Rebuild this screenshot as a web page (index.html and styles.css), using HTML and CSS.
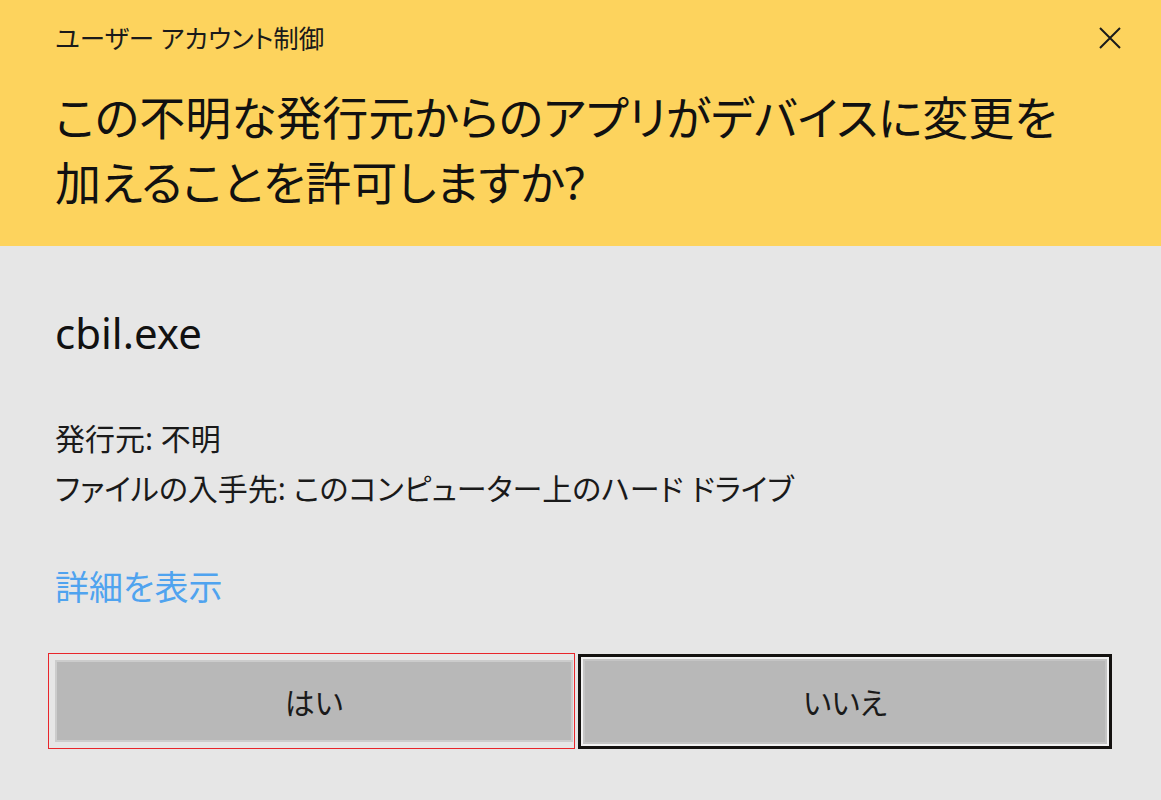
FILE: index.html
```html
<!DOCTYPE html>
<html lang="ja">
<head>
<meta charset="utf-8">
<title>ユーザー アカウント制御</title>
<link rel="stylesheet" href="styles.css">
</head>
<body>
<div class="dialog">
  <header class="head">
    <div class="titlebar">
      <span class="title">ユーザー アカウント制御</span>
      <span class="close" aria-label="閉じる">
        <svg width="24" height="24" viewBox="0 0 24 24"><path d="M2 2 L22 22 M22 2 L2 22" stroke="#1a1a1a" stroke-width="2" fill="none"/></svg>
      </span>
    </div>
    <h1 class="question">この不明な発行元からのアプリがデバイスに変更を<br>加えることを許可しますか?</h1>
  </header>
  <main class="body">
    <div class="app">cbil.exe</div>
    <div class="info">
      <div>発行元: 不明</div>
      <div>ファイルの入手先: このコンピューター上のハード ドライブ</div>
    </div>
    <a class="details">詳細を表示</a>
    <div class="buttons">
      <div class="mark"><button class="btn yes">はい</button></div>
      <div class="focus"><button class="btn no">いいえ</button></div>
    </div>
  </main>
</div>
</body>
</html>
```
FILE: styles.css
```css
html, body {
  margin: 0;
  padding: 0;
}
body {
  width: 1161px;
  height: 800px;
  overflow: hidden;
  background: #e6e6e6;
  font-family: "Noto Sans", "Noto Sans CJK JP", sans-serif;
  font-feature-settings: "palt";
  color: #151515;
}
.dialog {
  width: 1161px;
  height: 800px;
  background: #e6e6e6;
}
.head {
  background: #fdd35d;
  padding: 22px 0 31px 55px;
}
.titlebar {
  display: flex;
  align-items: center;
  justify-content: space-between;
  height: 32px;
  padding-right: 39px;
}
.title {
  font-size: 25.5px;
  line-height: 32px;
  color: #1a1a1a;
}
.close {
  display: flex;
  width: 24px;
  height: 24px;
}
.question {
  margin: 31px 0 0 0;
  font-size: 46px;
  font-weight: 400;
  line-height: 65px;
  color: #111;
}
.body {
  padding: 61px 0 0 55px;
  display: flex;
  flex-direction: column;
}
.app {
  font-size: 42px;
  line-height: 52px;
  color: #111;
}
.info {
  margin-top: 55px;
  font-size: 30px;
  line-height: 50px;
  color: #1a1a1a;
}
.details {
  margin-top: 48px;
  font-size: 34px;
  line-height: 50px;
  color: #4fa3ef;
  align-self: flex-start;
}
.buttons {
  margin-top: 41px;
  margin-left: -7px;
  display: flex;
  align-items: center;
}
.mark {
  border: 1px solid #e8262b;
  padding: 6px 1px 6px 6px;
  display: flex;
}
.btn {
  font-family: inherit;
  font-feature-settings: "palt";
  font-size: 30px;
  color: #1a1a1a;
  background: #b8b8b8;
  border: 2px solid #cccccc;
  padding: 0;
  margin: 0;
}
.yes {
  width: 518px;
  height: 82px;
}
.focus {
  margin-left: 3px;
  border: 3px solid #141210;
  padding: 2px;
  background: #f2f2f2;
  display: flex;
}
.no {
  width: 524px;
  height: 85px;
  border-color: #c4c4c4;
}
```
